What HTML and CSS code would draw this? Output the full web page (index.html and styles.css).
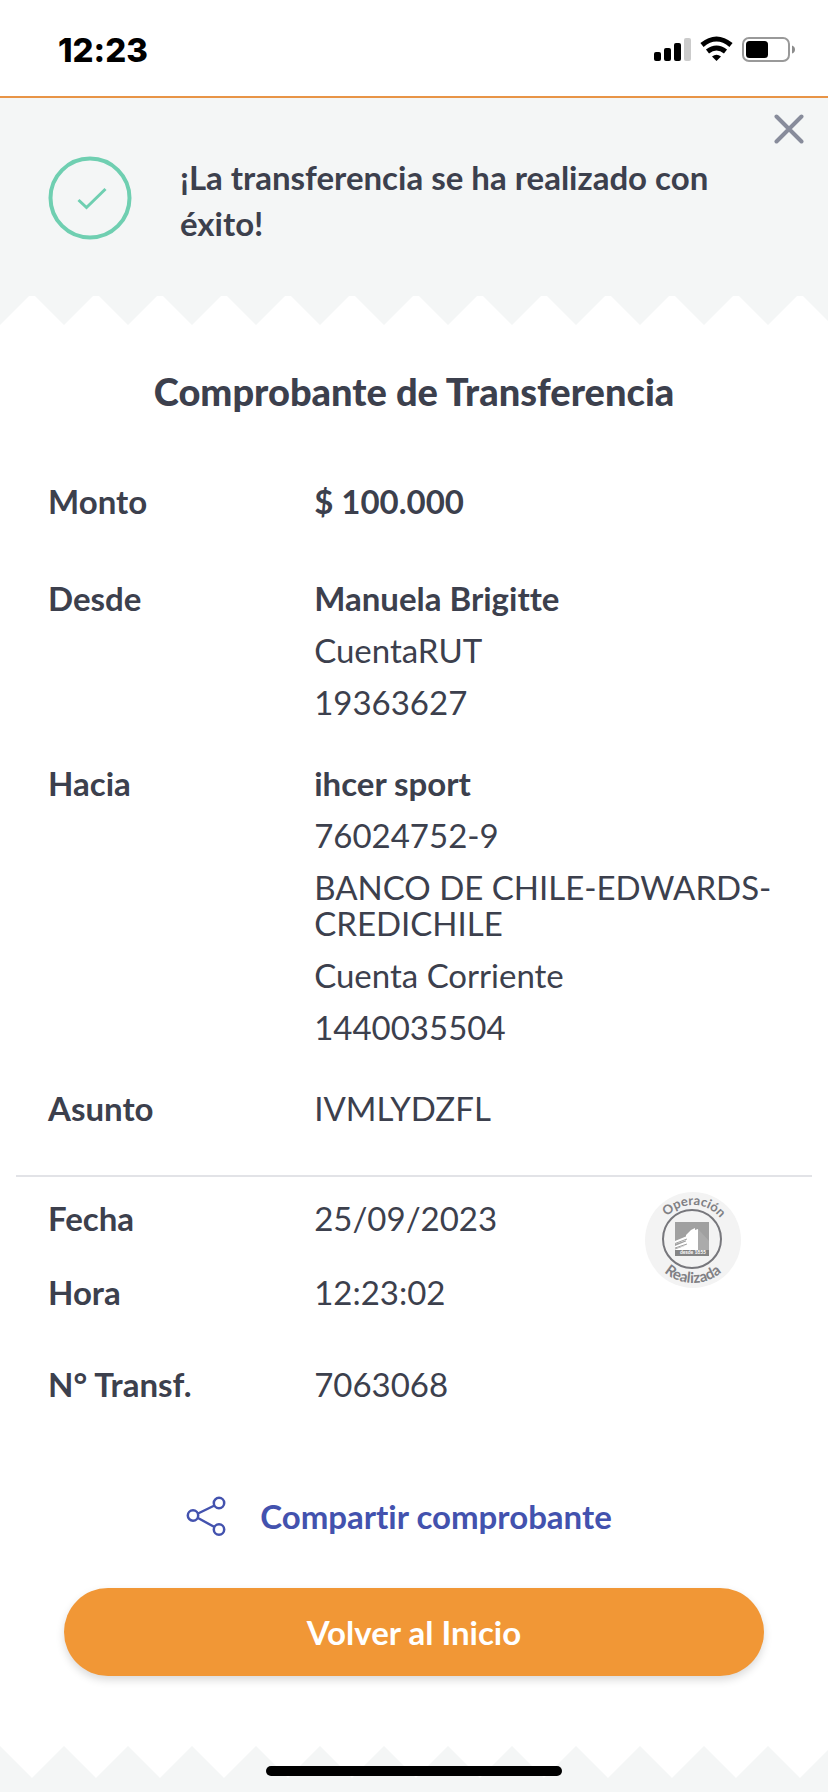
FILE: index.html
```html
<!DOCTYPE html>
<html lang="es">
<head>
<meta charset="utf-8">
<meta name="viewport" content="width=device-width, initial-scale=1">
<title>Comprobante de Transferencia</title>
<link rel="stylesheet" href="styles.css">
</head>
<body>
<div class="screen">
  <header class="status-bar">
    <time class="clock">12:23</time>
    <svg class="status-icons" width="144" height="28" viewBox="0 0 144 28" aria-hidden="true">
      <rect x="2" y="16" width="7" height="9" rx="2"/>
      <rect x="12" y="12" width="7" height="13" rx="2"/>
      <rect x="22" y="7" width="7" height="18" rx="2"/>
      <rect x="32" y="2" width="7" height="23" rx="2" fill="#cbcbcb"/>
      <path d="M50 9 Q64.500 -3 79 9" fill="none" stroke="#000" stroke-width="5"/>
      <path d="M55.500 15.500 Q64.500 8.500 73.500 15.500" fill="none" stroke="#000" stroke-width="5"/>
      <path d="M60 20.500 Q64.500 17 69 20.500 L64.500 25 Z"/>
      <rect x="91" y="2" width="46" height="23" rx="6" fill="none" stroke="#999" stroke-width="2"/>
      <rect x="94" y="5" width="22" height="17" rx="3.500"/>
      <path d="M140 9.500 Q143 10.500 143 13.500 Q143 16.500 140 17.500 Z" fill="#8c8c8c"/>
    </svg>
  </header>

  <section class="banner">
    <button class="close" type="button" aria-label="Cerrar">
      <svg width="30" height="30" viewBox="0 0 30 30" aria-hidden="true"><path d="M2.500 2.500 27.500 27.500M27.500 2.500 2.500 27.500"/></svg>
    </button>
    <svg class="check" width="84" height="84" viewBox="0 0 84 84" aria-hidden="true">
      <circle cx="42" cy="42" r="39.500" stroke-width="4"/>
      <path d="M30.500 44 38.500 51.500 57.500 33" stroke-width="3"/>
    </svg>
    <h1 class="message">¡La transferencia se ha realizado con éxito!</h1>
  </section>
  <svg class="zigzag" width="100%" height="32" aria-hidden="true">
    <defs><pattern id="teeth-down" width="64" height="32" patternUnits="userSpaceOnUse"><path d="M0 0H29L0 29ZM35 0H64V29Z"/></pattern></defs>
    <rect width="100%" height="32" fill="url(#teeth-down)"/>
  </svg>

  <main class="receipt">
    <h2 class="title">Comprobante de Transferencia</h2>
    <dl class="details">
      <div class="row row-amount"><dt>Monto</dt><dd><strong>$ 100.000</strong></dd></div>
      <div class="row"><dt>Desde</dt><dd><strong>Manuela Brigitte</strong><span>CuentaRUT</span><span>19363627</span></dd></div>
      <div class="row"><dt>Hacia</dt><dd><strong>ihcer sport</strong><span>76024752-9</span><span>BANCO DE CHILE-EDWARDS-<wbr>CREDICHILE</span><span>Cuenta Corriente</span><span>1440035504</span></dd></div>
      <div class="row"><dt>Asunto</dt><dd><span>IVMLYDZFL</span></dd></div>
    </dl>
    <hr class="divider">
    <div class="operation">
      <dl class="details operation-list">
        <div class="row row-date"><dt>Fecha</dt><dd><span>25/09/2023</span></dd></div>
        <div class="row row-time"><dt>Hora</dt><dd><span>12:23:02</span></dd></div>
        <div class="row"><dt>N° Transf.</dt><dd><span>7063068</span></dd></div>
      </dl>
      <svg class="stamp" width="96" height="96" viewBox="0 0 96 96" role="img" aria-label="Operación Realizada">
        <defs>
          <path id="arc-top" d="M13 48A35 35 0 0 1 83 48"/>
          <path id="arc-bottom" d="M5 48A43 43 0 0 0 91 48"/>
        </defs>
        <circle cx="48" cy="48" r="48" fill="#f3f3f3"/>
        <circle cx="47" cy="47" r="29" fill="none" stroke="#77777c" stroke-width="2"/>
        <text class="stamp-text"><textPath href="#arc-top" startOffset="51%" text-anchor="middle">Operación</textPath></text>
        <text class="stamp-text stamp-text-wide"><textPath href="#arc-bottom" startOffset="50%" text-anchor="middle">Realizada</textPath></text>
        <rect x="30" y="30" width="34" height="34" fill="#a0a0a0"/>
        <path d="M53 37 64 49V58H53Z" fill="#ababab"/>
        <path d="M41 43 46 38 50 36V38L53 37V58H41Z" fill="#fff"/>
        <path d="M30 49 42 44V48L30 52ZM30 54 42 49V53L30 56.500ZM30 57.500 42 53V58H30Z" fill="#fff"/>
        <path d="M30 51.500 42 47M30 56 42 52" stroke="#a0a0a0"/>
        <rect x="30" y="58" width="34" height="6" fill="#858585"/>
        <text class="stamp-year" x="48" y="62" text-anchor="middle">desde 1855</text>
      </svg>
    </div>
    <div class="actions">
      <button class="share" type="button">
        <svg width="40" height="40" viewBox="0 0 40 40" aria-hidden="true"><circle cx="7" cy="19.500" r="5.200"/><circle cx="33" cy="7" r="5.200"/><circle cx="33" cy="33.500" r="5.200"/><path d="M12 17.500 28.500 9.500M12 22 28.500 31"/></svg>
        <span>Compartir comprobante</span>
      </button>
      <button class="home" type="button">Volver al Inicio</button>
    </div>
  </main>

  <footer class="bottom">
    <svg class="zigzag" width="100%" height="32" aria-hidden="true">
      <defs><pattern id="teeth-up" width="64" height="32" patternUnits="userSpaceOnUse"><path d="M0 0 32 32H0ZM64 0V32H32Z"/></pattern></defs>
      <rect width="100%" height="32" fill="url(#teeth-up)"/>
    </svg>
    <div class="home-indicator"></div>
  </footer>
</div>
</body>
</html>
```
FILE: styles.css
```css
* { box-sizing: border-box; }
body {
  margin: 0;
  background: #fff;
  color: #3c404d;
  font-family: Lato, "Noto Sans", sans-serif;
  font-size: 33px;
  line-height: 36px;
  font-variant-ligatures: none;
}
h1, h2, dl, dd { margin: 0; }
button { border: 0; padding: 0; background: none; font: inherit; font-variant-ligatures: none; cursor: pointer; }
svg { display: block; flex: none; }
strong, dt { font-weight: 700; }

.screen { min-height: 100vh; display: flex; flex-direction: column; }

.status-bar {
  display: flex;
  align-items: center;
  justify-content: space-between;
  height: 98px;
  padding: 4px 32px 0 58px;
  border-bottom: 2px solid #e89446;
}
.clock { font-family: Inter, sans-serif; font-weight: 800; color: #000; }

.banner {
  position: relative;
  display: flex;
  align-items: center;
  gap: 48px;
  padding: 52px 64px 50px 48px;
  background: #f4f6f6;
}
.check { fill: none; stroke: #6fcfb1; }
.message { flex: 1; padding-top: 4px; font-size: 33px; line-height: 46px; font-weight: 700; }
.close { position: absolute; top: 16px; right: 24px; }
.close svg { fill: none; stroke: #888c9b; stroke-width: 4; stroke-linecap: round; }
.zigzag { fill: #f4f6f6; }

.receipt { flex: 1; }
.title {
  margin: 43px 32px 72px;
  font-size: 38px;
  line-height: 40px;
  font-weight: 900;
  text-align: center;
}
.details { display: flex; flex-direction: column; gap: 45px; padding: 0 48px; }
.row { display: grid; grid-template-columns: 4fr 7fr; }
.row-amount { margin-bottom: 16px; }
.row dd { display: flex; flex-direction: column; gap: 16px; }
.divider { height: 2px; margin: 49px 16px 0; border: 0; background: #e2e3e7; }

.operation { position: relative; padding-top: 23px; }
.operation-list { gap: 0; }
.row-date { margin-bottom: 38px; }
.row-time { margin-bottom: 56px; }
.stamp { position: absolute; top: 15px; right: 87px; }
.stamp-text { font-size: 13px; font-weight: 700; fill: #808084; }
.stamp-text-wide { font-size: 15px; }
.stamp-year { font-size: 5px; font-weight: 700; fill: #fff; }

.actions { display: flex; flex-direction: column; align-items: center; padding: 94px 64px 0; }
.share { display: flex; align-items: center; gap: 34px; padding-right: 30px; font-weight: 700; color: #4352ae; }
.share svg { fill: none; stroke: #4352ae; stroke-width: 2.5; }
.home {
  width: 100%;
  height: 88px;
  margin-top: 52px;
  border-radius: 44px;
  background: #f19736;
  color: #fff;
  font-weight: 700;
  box-shadow: 0 4px 8px rgba(0, 0, 0, 0.15);
}

.bottom { position: relative; padding-bottom: 14px; background: linear-gradient(#fff 32px, #f4f6f6 32px); }
.home-indicator {
  position: absolute;
  left: 50%;
  bottom: 16px;
  width: 296px;
  height: 10px;
  border-radius: 5px;
  background: #000;
  transform: translateX(-50%);
}
```
